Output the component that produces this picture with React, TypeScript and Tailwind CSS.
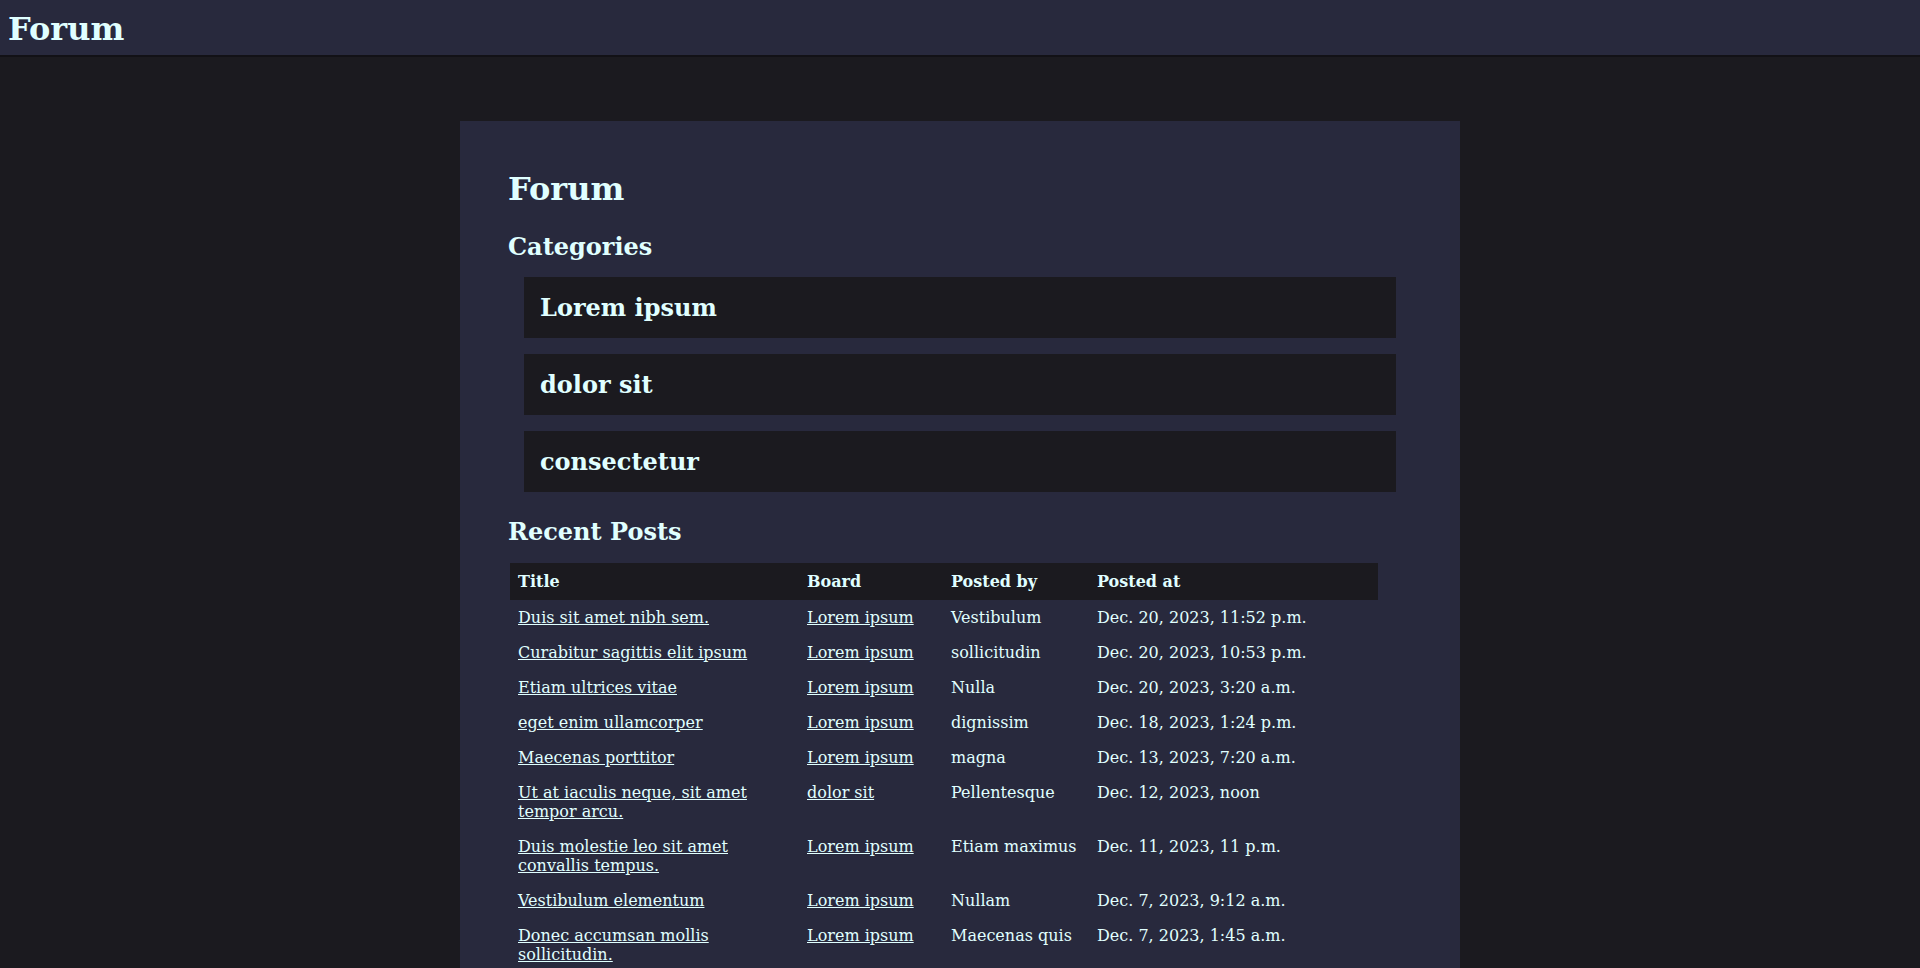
const categories = ['Lorem ipsum', 'dolor sit', 'consectetur'];

const posts = [
  { title: 'Duis sit amet nibh sem.', board: 'Lorem ipsum', by: 'Vestibulum', at: 'Dec. 20, 2023, 11:52 p.m.' },
  { title: 'Curabitur sagittis elit ipsum', board: 'Lorem ipsum', by: 'sollicitudin', at: 'Dec. 20, 2023, 10:53 p.m.' },
  { title: 'Etiam ultrices vitae', board: 'Lorem ipsum', by: 'Nulla', at: 'Dec. 20, 2023, 3:20 a.m.' },
  { title: 'eget enim ullamcorper', board: 'Lorem ipsum', by: 'dignissim', at: 'Dec. 18, 2023, 1:24 p.m.' },
  { title: 'Maecenas porttitor', board: 'Lorem ipsum', by: 'magna', at: 'Dec. 13, 2023, 7:20 a.m.' },
  { title: 'Ut at iaculis neque, sit amet tempor arcu.', board: 'dolor sit', by: 'Pellentesque', at: 'Dec. 12, 2023, noon' },
  { title: 'Duis molestie leo sit amet convallis tempus.', board: 'Lorem ipsum', by: 'Etiam maximus', at: 'Dec. 11, 2023, 11 p.m.' },
  { title: 'Vestibulum elementum', board: 'Lorem ipsum', by: 'Nullam', at: 'Dec. 7, 2023, 9:12 a.m.' },
  { title: 'Donec accumsan mollis sollicitudin.', board: 'Lorem ipsum', by: 'Maecenas quis', at: 'Dec. 7, 2023, 1:45 a.m.' },
  { title: 'Aliquam erat volutpat', board: 'consectetur', by: 'Integer', at: 'Dec. 5, 2023, 4:02 p.m.' },
];

export default function App() {
  return (
    <div className="min-h-screen bg-[#1b1a1f] text-[#e0ffff] font-['DejaVu_Serif',serif]">
      {/* Top bar */}
      <header className="h-[57px] bg-[#28293d] border-b-2 border-[#121116] pl-2 pt-[10px]">
        <h1 className="text-[32px] font-bold leading-[normal]">Forum</h1>
      </header>

      <main className="mx-auto mt-16 w-[1000px] bg-[#28293d] px-12 pt-[49px] pb-12">
        <h1 className="text-[32px] font-bold leading-[normal]">Forum</h1>

        <h2 className="mt-[24px] text-[24px] font-bold leading-[normal]">Categories</h2>
        <div className="mt-4 flex flex-col gap-4 mx-4">
          {categories.map((c) => (
            <a key={c} href="#" className="flex h-[61px] items-center bg-[#1b1a1f] pl-4">
              <h2 className="text-[24px] font-bold leading-[normal]">{c}</h2>
            </a>
          ))}
        </div>

        <h2 className="mt-[25px] text-[24px] font-bold leading-[normal]">Recent Posts</h2>
        <table className="mt-[17px] ml-[2px] w-[868px] table-fixed border-collapse text-[16px] leading-[19px]">
          <colgroup>
            <col className="w-[289px]" />
            <col className="w-[144px]" />
            <col className="w-[146px]" />
            <col className="w-[289px]" />
          </colgroup>
          <thead>
            <tr className="bg-[#1b1a1f] text-left">
              <th className="px-2 py-[9px] align-top font-bold">Title</th>
              <th className="px-2 py-[9px] align-top font-bold">Board</th>
              <th className="px-2 py-[9px] align-top font-bold">Posted by</th>
              <th className="px-2 py-[9px] align-top font-bold">Posted at</th>
            </tr>
          </thead>
          <tbody>
            {posts.map((p) => (
              <tr key={p.title}>
                <td className="p-2 align-top">
                  <a href="#" className="underline">{p.title}</a>
                </td>
                <td className="p-2 align-top">
                  <a href="#" className="underline">{p.board}</a>
                </td>
                <td className="p-2 align-top">{p.by}</td>
                <td className="p-2 align-top">{p.at}</td>
              </tr>
            ))}
          </tbody>
        </table>
      </main>
    </div>
  );
}
